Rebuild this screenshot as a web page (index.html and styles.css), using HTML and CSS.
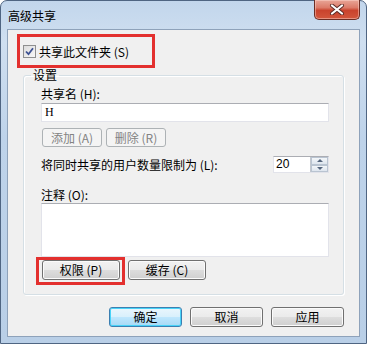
FILE: index.html
```html
<!DOCTYPE html>
<html lang="zh-CN">
<head>
  <meta charset="UTF-8" />
  <title>高级共享</title>
  <link rel="stylesheet" href="styles.css">
</head>
<body>
  <div class="window">
    <div class="titlebar">
      <span class="title">高级共享</span>
      <button class="close-btn" title="关闭">
        <svg width="16" height="11" viewBox="0 0 16 11">
          <path d="M3 1.5 L13 9.5 M13 1.5 L3 9.5" stroke="#5a2a25" stroke-width="4" stroke-linecap="round"/>
          <path d="M3 1.5 L13 9.5 M13 1.5 L3 9.5" stroke="#fff" stroke-width="2.2" stroke-linecap="round"/>
        </svg>
      </button>
    </div>

    <div class="client">
      <div class="mark share-toggle">
        <span class="checkbox">
          <svg width="11" height="11" viewBox="0 0 11 11">
            <path d="M2 5.5 L4.5 8.2 L9 2.2" fill="none" stroke="#3c5192" stroke-width="1.8"/>
          </svg>
        </span>
        <span class="check-label">共享此文件夹 (S)</span>
      </div>

      <fieldset class="group">
        <legend>设置</legend>
        <div class="group-body">
          <div class="label">共享名 (H):</div>
          <div class="textbox">H</div>

          <div class="btn-row">
            <button class="btn small" disabled>添加 (A)</button>
            <button class="btn small" disabled>删除 (R)</button>
          </div>

          <div class="limit-row">
            <span>将同时共享的用户数量限制为 (L):</span>
            <div class="spin">
              <span class="spin-value">20</span>
              <span class="spin-btns">
                <span class="spin-arrow up"></span>
                <span class="spin-arrow down"></span>
              </span>
            </div>
          </div>

          <div class="label comment-label">注释 (O):</div>
          <div class="textarea"></div>

          <div class="btn-row perm-row">
            <div class="mark perm-mark">
              <button class="btn medium">权限 (P)</button>
            </div>
            <button class="btn medium">缓存 (C)</button>
          </div>
        </div>
      </fieldset>

      <div class="dialog-buttons">
        <button class="btn wide default">确定</button>
        <button class="btn wide">取消</button>
        <button class="btn wide">应用</button>
      </div>
    </div>
  </div>
</body>
</html>
```

FILE: styles.css
```css
body {
  margin: 0;
  padding: 0;
  font-family: "Noto Sans CJK SC", "Noto Sans", sans-serif;
  font-size: 12px;
  color: #000;
  background: #fff;
}
.window {
  width: 367px;
  height: 344px;
  box-sizing: border-box;
  border: 1px solid #4f6582;
  border-radius: 7px 7px 0 0;
  background: linear-gradient(to bottom, #c2d6ec 0%, #cfdff0 12%, #bed3ea 40%, #b9cfe7 100%);
  display: flex;
  flex-direction: column;
}
.titlebar {
  height: 28px;
  display: flex;
  align-items: flex-start;
  padding-left: 7px;
}
.title {
  margin-top: 7px;
  line-height: 15px;
  color: #000;
}
.close-btn {
  margin-left: auto;
  margin-right: 6px;
  margin-top: -1px;
  width: 46px;
  height: 20px;
  padding: 0;
  border: 1px solid #6b2d24;
  border-top: none;
  border-radius: 0 0 5px 5px;
  background: linear-gradient(to bottom, #e8a597 0%, #dc7b69 40%, #c9432d 55%, #d2563c 100%);
  box-shadow: inset 0 0 0 1px rgba(255, 220, 210, 0.45);
  display: flex;
  align-items: center;
  justify-content: center;
}
.client {
  flex: 1;
  margin: 0 6px 6px 6px;
  background: #f0f0f0;
  border: 1px solid #8ea2ba;
  display: flex;
  flex-direction: column;
}
.mark {
  border: 3px solid #e3302e;
  box-sizing: border-box;
}
.share-toggle {
  margin: 4px 0 0 9px;
  width: 138px;
  height: 34px;
  display: flex;
  align-items: center;
  padding-left: 3px;
}
.checkbox {
  width: 13px;
  height: 13px;
  box-sizing: border-box;
  border: 1px solid #8e8f8f;
  background: linear-gradient(135deg, #dcdcdc 0%, #f7f7f7 100%);
  display: flex;
  align-items: center;
  justify-content: center;
  margin-top: 1px;
}
.check-label {
  margin-left: 3px;
  line-height: 15px;
}
.group {
  margin: 0 15px;
  padding: 0;
  border: 1px solid #d5dfe5;
  border-radius: 3px;
  box-shadow: inset 1px 1px 0 #fff, 1px 1px 0 #fff;
  min-width: 0;
}
.group legend {
  margin-left: 7px;
  padding: 0 2px;
  line-height: 14px;
}
.group-body {
  padding: 4px 14px 9px 17px;
}
.label {
  line-height: 15px;
}
.textbox {
  margin-top: 2px;
  height: 19px;
  box-sizing: border-box;
  background: #fff;
  border: 1px solid #e2e3ea;
  border-top-color: #abadb3;
  padding-left: 3px;
  line-height: 17px;
  font-family: "Liberation Serif", serif;
  font-size: 12px;
}
.btn-row {
  display: flex;
  gap: 4px;
  margin-top: 6px;
  margin-left: 1px;
}
.btn {
  font: inherit;
  color: #000;
  height: 19px;
  box-sizing: border-box;
  padding: 0;
  border: 1px solid #707070;
  border-radius: 3px;
  background: linear-gradient(to bottom, #f2f2f2 0%, #ebebeb 48%, #dddddd 52%, #cfcfcf 100%);
  box-shadow: inset 0 0 0 1px #fbfbfb;
  line-height: 16px;
}
.btn:disabled {
  color: #838383;
  border-color: #adb2b5;
  background: #f4f4f4;
  box-shadow: none;
}
.btn.small {
  width: 60px;
}
.btn.medium {
  width: 78px;
  height: 20px;
}
.btn.wide {
  width: 73px;
}
.btn.default {
  border-color: #3c7fb1;
  box-shadow: inset 0 0 0 1px #48d3f8;
  background: linear-gradient(to bottom, #eaf6fd 0%, #d9f0fc 48%, #bee6fd 52%, #a7d9f5 100%);
}
.limit-row {
  margin-top: 9px;
  display: flex;
  align-items: center;
  justify-content: space-between;
}
.spin {
  width: 56px;
  height: 17px;
  box-sizing: border-box;
  background: #fff;
  border: 1px solid #e2e3ea;
  border-top-color: #abadb3;
  display: flex;
}
.spin-value {
  flex: 1;
  padding-left: 2px;
  line-height: 15px;
  font-family: "Liberation Sans", sans-serif;
}
.spin-btns {
  width: 17px;
  display: flex;
  flex-direction: column;
  border-left: 1px solid #c3c8cf;
}
.spin-arrow {
  flex: 1;
  display: flex;
  align-items: center;
  justify-content: center;
  background: linear-gradient(to bottom, #f3f6f9, #dde5ee);
  border: 1px solid #b9c4d1;
}
.spin-arrow::before {
  content: "";
  border-left: 3px solid transparent;
  border-right: 3px solid transparent;
}
.spin-arrow.up::before {
  border-bottom: 3px solid #55667e;
}
.spin-arrow.down::before {
  border-top: 3px solid #55667e;
}
.comment-label {
  margin-top: 14px;
}
.textarea {
  margin-top: 1px;
  height: 54px;
  box-sizing: border-box;
  background: #fff;
  border: 1px solid #e2e3ea;
  border-top-color: #abadb3;
}
.perm-row {
  margin-top: 0;
  margin-left: -5px;
  gap: 3px;
}
.perm-mark {
  padding: 0 2px 2px 3px;
}
.perm-row > .btn {
  margin-top: 3px;
}
.dialog-buttons {
  display: flex;
  justify-content: flex-end;
  gap: 8px;
  margin: 12px 15px 0 0;
}
.dialog-buttons .btn {
  height: 20px;
}
```
